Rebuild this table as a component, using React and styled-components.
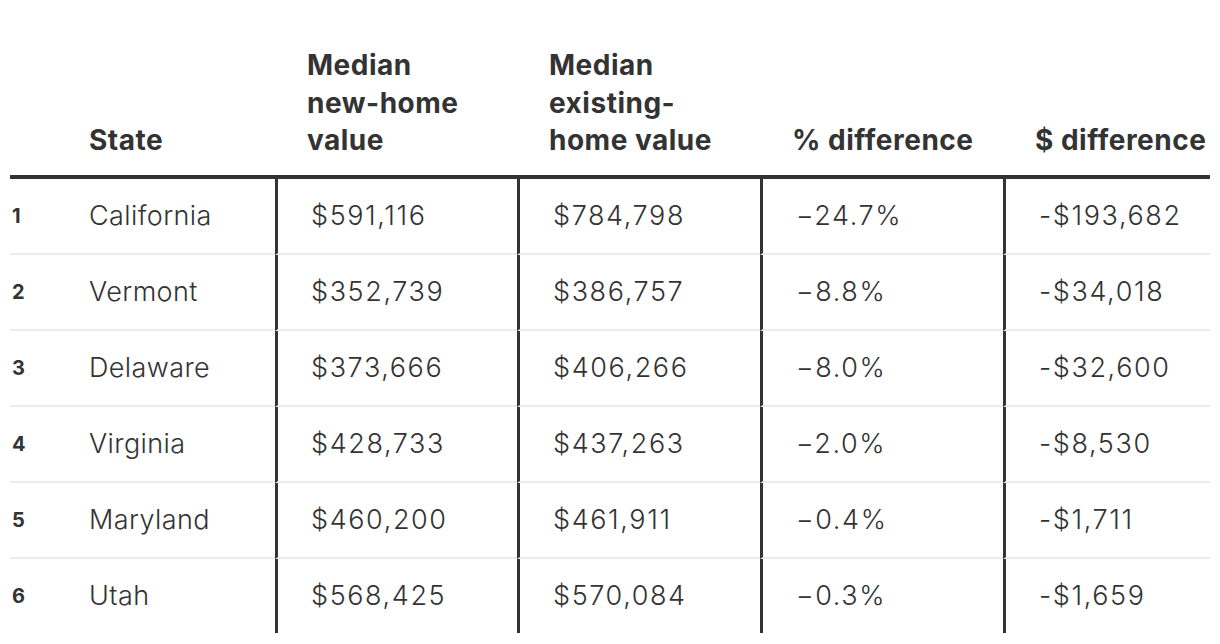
import React from "react";
import styled, { createGlobalStyle } from "styled-components";

const rows = [
  { rank: 1, state: "California", newValue: "$591,116", existing: "$784,798", pct: "−24.7%", diff: "-$193,682" },
  { rank: 2, state: "Vermont", newValue: "$352,739", existing: "$386,757", pct: "−8.8%", diff: "-$34,018" },
  { rank: 3, state: "Delaware", newValue: "$373,666", existing: "$406,266", pct: "−8.0%", diff: "-$32,600" },
  { rank: 4, state: "Virginia", newValue: "$428,733", existing: "$437,263", pct: "−2.0%", diff: "-$8,530" },
  { rank: 5, state: "Maryland", newValue: "$460,200", existing: "$461,911", pct: "−0.4%", diff: "-$1,711" },
  { rank: 6, state: "Utah", newValue: "$568,425", existing: "$570,084", pct: "−0.3%", diff: "-$1,659" },
];

const App = () => {
  return (
    <Page>
      <GlobalStyle />
      <Table>
        <HeaderRow>
          <HeadCell />
          <HeadCell>State</HeadCell>
          <HeadCell $pad>
            Median
            <br />
            new-home
            <br />
            value
          </HeadCell>
          <HeadCell $pad>
            Median
            <br />
            existing-
            <br />
            home value
          </HeadCell>
          <HeadCell $pad>% difference</HeadCell>
          <HeadCell $pad>$ difference</HeadCell>
        </HeaderRow>
        {rows.map((row, i) => {
          const last = i === rows.length - 1;
          return (
            <BodyRow key={row.rank}>
              <Rank $last={last}>{row.rank}</Rank>
              <Cell $last={last}>{row.state}</Cell>
              <Cell $divided $numeric $last={last}>{row.newValue}</Cell>
              <Cell $divided $numeric $last={last}>{row.existing}</Cell>
              <Cell $divided $numeric $last={last}>{row.pct}</Cell>
              <Cell $divided $numeric $last={last}>{row.diff}</Cell>
            </BodyRow>
          );
        })}
      </Table>
    </Page>
  );
};

const GlobalStyle = createGlobalStyle`
  body {
    margin: 0;
    background: #fff;
    color: #333;
    font-family: Inter, "Liberation Sans", sans-serif;
  }
`;

const Page = styled.div`
  padding: 47px 10px 0;
`;

const Table = styled.div`
  width: 1200px;
`;

const columns = "79px 186px 242px 243px 243px 207px";

const HeaderRow = styled.div`
  display: grid;
  grid-template-columns: ${columns};
  align-items: end;
  border-bottom: 4px solid #333;
`;

const HeadCell = styled.div`
  font-size: 28px;
  font-weight: 700;
  line-height: 37.5px;
  letter-spacing: 0.5px;
  color: #333;
  padding-left: ${(p) => (p.$pad ? "32px" : "0")};
  padding-bottom: 15px;
  white-space: nowrap;
`;

const BodyRow = styled.div`
  display: grid;
  grid-template-columns: ${columns};
`;

const Cell = styled.div`
  display: flex;
  align-items: center;
  height: 74px;
  font-size: 27px;
  font-weight: 300;
  letter-spacing: ${(p) => (p.$numeric ? "1.6px" : "0.4px")};
  color: #333;
  white-space: nowrap;
  padding-left: ${(p) => (p.$divided ? "33px" : "0")};
  border-left: ${(p) => (p.$divided ? "3px solid #333" : "none")};
  border-bottom: ${(p) => (p.$last ? "none" : "2px solid #ececec")};
`;

const Rank = styled(Cell)`
  font-size: 20px;
  font-weight: 700;
  letter-spacing: 0;
  padding-left: 2px;
`;

export default App;
